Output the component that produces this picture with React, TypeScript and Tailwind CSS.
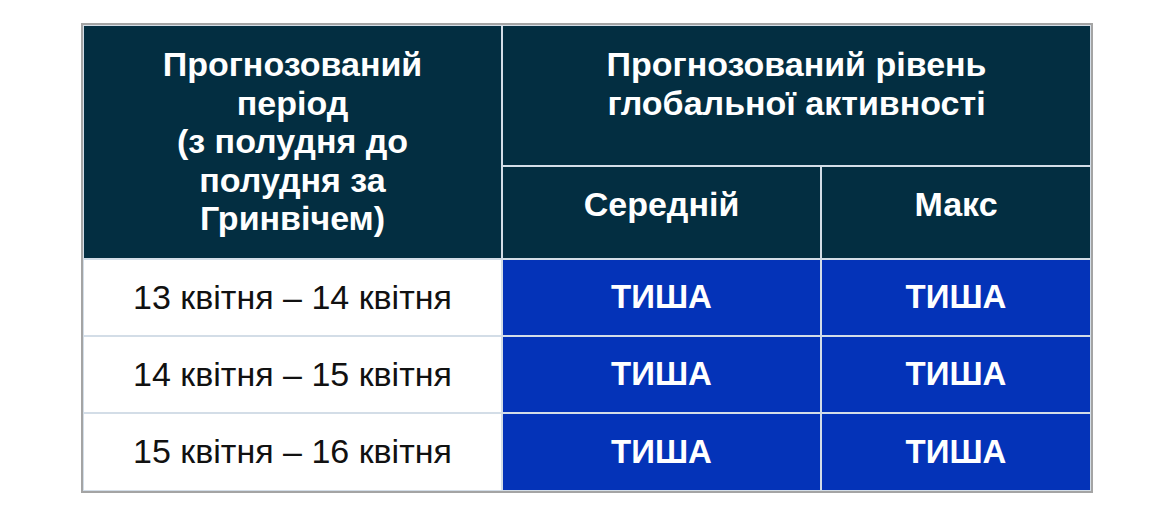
const rows = [
  '13 квітня – 14 квітня',
  '14 квітня – 15 квітня',
  '15 квітня – 16 квітня',
];

export default function App() {
  return (
    <div className="min-h-[516px] w-[1152px] bg-white pl-[81px] pt-[23px] font-['Liberation_Sans',Arial,sans-serif]">
      <div className="w-fit border-2 border-[#a4a4a4]">
        <div className="grid grid-cols-[417px_317px_268px] grid-rows-[139px_91px_75px_75px_76px] gap-[2px] bg-[#d3dde7] p-px">
          <div className="row-span-2 bg-[#032e41] pt-[19px] text-center text-[34px] font-bold leading-[38.5px] text-white">
            Прогнозований
            <br />
            період
            <br />
            (з полудня до
            <br />
            полудня за
            <br />
            Гринвічем)
          </div>
          <div className="col-span-2 bg-[#032e41] pt-[19px] text-center text-[34px] font-bold leading-[38.5px] text-white">
            Прогнозований рівень
            <br />
            глобальної активності
          </div>
          <div className="bg-[#032e41] pt-[18px] text-center text-[34px] font-bold leading-[38.5px] text-white">
            Середній
          </div>
          <div className="bg-[#032e41] pt-[18px] text-center text-[34px] font-bold leading-[38.5px] text-white">
            Макс
          </div>
          {rows.map((r) => (
            <Row key={r} label={r} />
          ))}
        </div>
      </div>
    </div>
  );
}

function Row({ label }: { label: string }) {
  return (
    <>
      <div className="flex items-center justify-center bg-white pb-px text-[34px] text-[#111]">{label}</div>
      <div className="flex items-center justify-center bg-[#0433b8] pb-px text-[33px] font-bold text-white">ТИША</div>
      <div className="flex items-center justify-center bg-[#0433b8] pb-px text-[33px] font-bold text-white">ТИША</div>
    </>
  );
}
